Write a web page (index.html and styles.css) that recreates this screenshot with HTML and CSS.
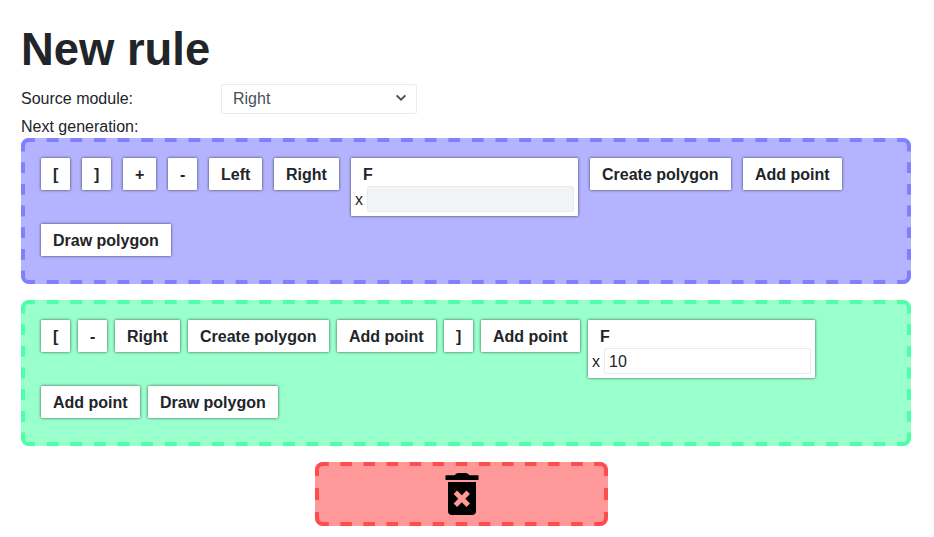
FILE: index.html
```html
<!DOCTYPE html>
<html lang="en">
<head>
<meta charset="utf-8">
<title>New rule</title>
<link rel="stylesheet" href="styles.css">
</head>
<body>
<main class="page">
  <h1 class="title">New rule</h1>
  <div class="source">
    <label class="source-label">Source module:</label>
    <div class="select"><span>Right</span>
      <svg class="chevron" width="12" height="8" viewBox="0 0 12 8"><path d="M1.6 1.4 6 5.6 10.4 1.4" fill="none" stroke="#495057" stroke-width="2"/></svg>
    </div>
  </div>
  <div class="caption">Next generation:</div>
  <section class="zone palette">
    <svg class="outline" width="890" height="146">
      <path d="M2 8A6 6 0 0 1 8 2M882 2A6 6 0 0 1 888 8M888 138A6 6 0 0 1 882 144M8 144A6 6 0 0 1 2 138"/>
      <path class="wide" d="M8 2H882M8 144H882"/>
      <path class="tall" d="M2 8V138M888 8V138"/>
    </svg>
    <div class="chip sign">[</div>
    <div class="chip sign">]</div>
    <div class="chip plus">+</div>
    <div class="chip sign">-</div>
    <div class="chip left">Left</div>
    <div class="chip right">Right</div>
    <div class="chip module"><div class="name">F</div><div class="param"><span>x</span><div class="field disabled"></div></div></div>
    <div class="chip create">Create polygon</div>
    <div class="chip add">Add point</div>
    <div class="chip draw">Draw polygon</div>
  </section>
  <section class="zone result">
    <svg class="outline" width="890" height="146">
      <path d="M2 8A6 6 0 0 1 8 2M882 2A6 6 0 0 1 888 8M888 138A6 6 0 0 1 882 144M8 144A6 6 0 0 1 2 138"/>
      <path class="wide" d="M8 2H882M8 144H882"/>
      <path class="tall" d="M2 8V138M888 8V138"/>
    </svg>
    <div class="chip sign">[</div>
    <div class="chip sign">-</div>
    <div class="chip right">Right</div>
    <div class="chip create">Create polygon</div>
    <div class="chip add">Add point</div>
    <div class="chip sign">]</div>
    <div class="chip add">Add point</div>
    <div class="chip module"><div class="name">F</div><div class="param"><span>x</span><div class="field">10</div></div></div>
    <div class="chip add">Add point</div>
    <div class="chip draw">Draw polygon</div>
  </section>
  <section class="zone trash">
    <svg class="outline" width="293" height="64">
      <path d="M2 8A6 6 0 0 1 8 2M285 2A6 6 0 0 1 291 8M291 56A6 6 0 0 1 285 62M8 62A6 6 0 0 1 2 56"/>
      <path class="wide" d="M8 2H285M8 62H285"/>
      <path class="tall" d="M2 8V56M291 8V56"/>
    </svg>
    <svg width="34" height="42" viewBox="0 0 34 42"><path d="M.5 2.3H9.5Q11.5 0 13.5 0H20.5Q22.5 0 24.5 2.3H33.5V7H.5Z"/><path fill-rule="evenodd" d="M3 9H31V38Q31 42 27 42H7Q3 42 3 38ZM12.1 17.600 8.600 21.100 13.300 25.800 8.600 30.500 12.100 34 16.800 29.300 21.500 34 25 30.500 20.300 25.800 25 21.100 21.500 17.600 16.800 22.300Z"/></svg>
  </section>
</main>
</body>
</html>
```

FILE: styles.css
```css
* { box-sizing: border-box; }
body {
  margin: 0;
  background: #fff;
  color: #212529;
  font: 16px/24px "Liberation Sans", Arial, sans-serif;
}
.page { padding: 23px 23px 0 21px; }
.title { margin: 0; font-size: 45.4px; line-height: 54px; }
.source { display: flex; align-items: center; margin-top: 7px; height: 30px; }
.source-label { width: 200px; }
.select {
  display: flex;
  align-items: center;
  justify-content: space-between;
  width: 196px;
  height: 30px;
  padding: 0 9px 0 11px;
  border: 1px solid #e9ecef;
  border-radius: 2px;
  color: #495057;
}
.chevron { margin-top: -2px; }
.caption { height: 24px; line-height: 25px; }
.zone {
  position: relative;
  display: flex;
  flex-wrap: wrap;
  align-items: flex-start;
  align-content: flex-start;
  height: 146px;
  padding: 20px;
  border-radius: 8px;
}
.outline {
  position: absolute;
  inset: 0;
  fill: none;
  stroke: currentColor;
  stroke-width: 4;
}
/* Dashes start and end with a half dash, so they join the rounded corners. */
.wide { stroke-dasharray: 11.811; stroke-dashoffset: 5.905; }
.tall { stroke-dasharray: 10.833; stroke-dashoffset: 5.417; }
.palette { background: #b3b3ff; gap: 8px 12px; }
.palette .outline { color: #8080ff; }
.result { margin-top: 16px; background: #99ffcc; gap: 8px 8px; }
.result .outline { color: #4dffa6; }
.trash {
  width: 293px;
  height: 64px;
  margin: 16px 0 0 294px;
  padding: 11px 0 0;
  justify-content: center;
  background: #ff9999;
}
.trash .outline { color: #ff4d4d; }
.trash .wide { stroke-dasharray: 11.542; stroke-dashoffset: 5.771; }
.trash .tall { stroke-dasharray: 12; stroke-dashoffset: 6; }
.chip {
  height: 32px;
  padding-left: 12px;
  line-height: 33px;
  font-weight: bold;
  white-space: nowrap;
  background: #fff;
  border-radius: 1px;
  box-shadow: 0 0 3px rgba(0, 0, 0, .7);
}
.sign { width: 29px; }
.plus { width: 33px; }
.left { width: 53px; }
.right { width: 65px; }
.create { width: 141px; }
.add { width: 99px; }
.draw { width: 130px; }
.module { width: 227px; height: 58px; padding: 0 4px; }
.name { height: 28px; padding-left: 8px; }
.param { display: flex; gap: 4px; font-weight: normal; line-height: 27px; }
.field {
  flex: 1;
  height: 26px;
  padding-left: 4px;
  line-height: 25px;
  border: 1px solid #e9ecef;
  border-radius: 2px;
}
.disabled { background: #f1f3f5; }
```
